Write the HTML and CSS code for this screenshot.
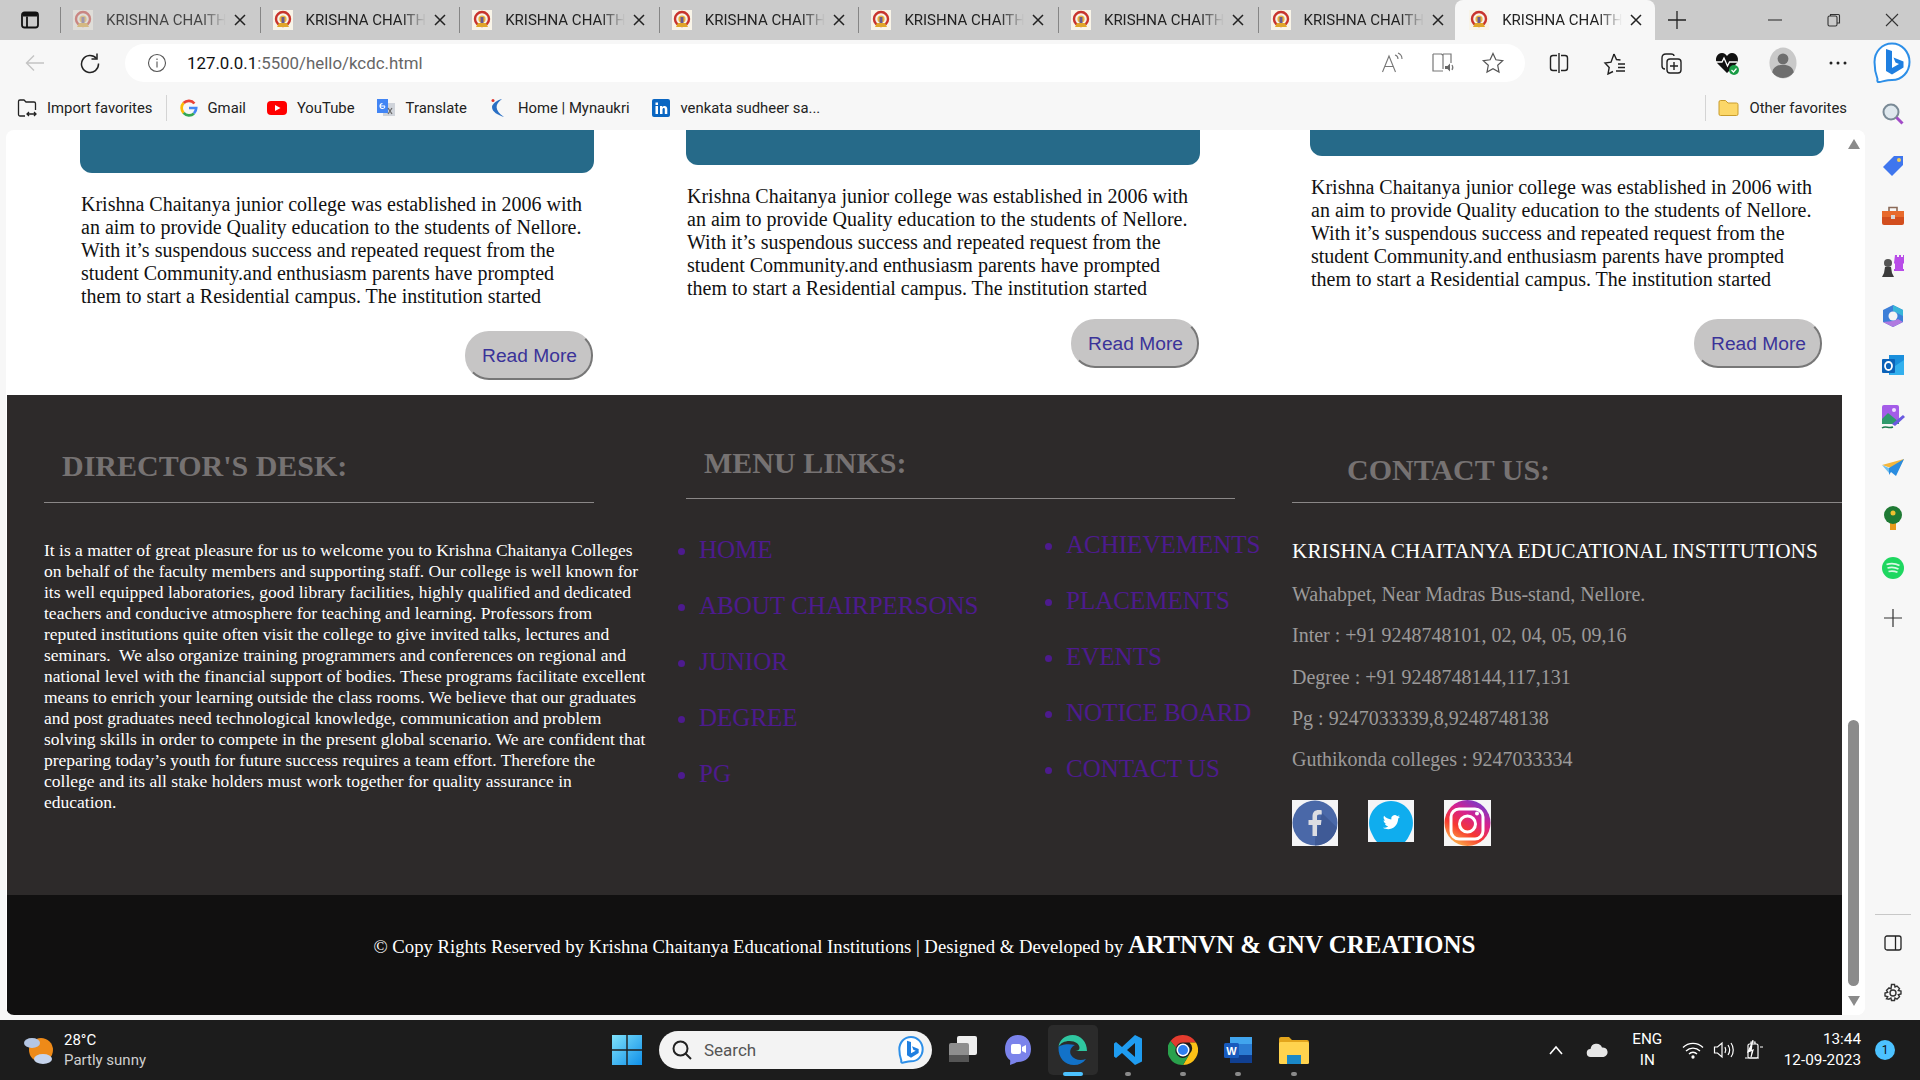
FILE: index.html
```html
<!DOCTYPE html>
<html lang="en">
<head>
    <meta charset="UTF-8">
    <title>KRISHNA CHAITHANYA</title>
    <link rel="stylesheet" href="styles.css">
</head>
<body>
    <svg class="defs" width="0" height="0">
        <symbol id="fav" viewBox="0 0 20 20">
            <rect width="20" height="20" fill="#f8f4e8"/>
            <circle cx="10" cy="9" r="7" fill="none" stroke="#c8342c" stroke-width="2.4"/>
            <circle cx="10" cy="9" r="3.6" fill="#e8b23c"/>
            <path d="M6 13h8l2 4H4z" fill="#e0a52a"/>
            <path d="M8.500 7h3v6h-3z" fill="#6a5a8c"/>
        </symbol>
        <symbol id="tabx" viewBox="0 0 12 12">
            <path d="M1 1l10 10M11 1L1 11" stroke="#222" stroke-width="1.500"/>
        </symbol>
    </svg>

    <div class="tabstrip">
        <div class="strip-btn">
            <svg width="20" height="20" viewBox="0 0 20 20" fill="none" stroke="#111" stroke-width="1.800"><rect x="2" y="2.500" width="16" height="15" rx="2.500"/><path d="M7 6.500V17"/><path d="M3 3h14v3.500H3z" fill="#111" stroke="none"/></svg>
        </div>
        <div class="tab faded"><svg class="favicon"><use href="#fav"/></svg><span class="tab-title">KRISHNA CHAITH</span><svg class="tab-x"><use href="#tabx"/></svg></div>
        <div class="tab"><svg class="favicon"><use href="#fav"/></svg><span class="tab-title">KRISHNA CHAITH</span><svg class="tab-x"><use href="#tabx"/></svg></div>
        <div class="tab"><svg class="favicon"><use href="#fav"/></svg><span class="tab-title">KRISHNA CHAITH</span><svg class="tab-x"><use href="#tabx"/></svg></div>
        <div class="tab"><svg class="favicon"><use href="#fav"/></svg><span class="tab-title">KRISHNA CHAITH</span><svg class="tab-x"><use href="#tabx"/></svg></div>
        <div class="tab"><svg class="favicon"><use href="#fav"/></svg><span class="tab-title">KRISHNA CHAITH</span><svg class="tab-x"><use href="#tabx"/></svg></div>
        <div class="tab"><svg class="favicon"><use href="#fav"/></svg><span class="tab-title">KRISHNA CHAITH</span><svg class="tab-x"><use href="#tabx"/></svg></div>
        <div class="tab"><svg class="favicon"><use href="#fav"/></svg><span class="tab-title">KRISHNA CHAITH</span><svg class="tab-x"><use href="#tabx"/></svg></div>
        <div class="tab active"><svg class="favicon"><use href="#fav"/></svg><span class="tab-title">KRISHNA CHAITH</span><svg class="tab-x"><use href="#tabx"/></svg></div>
        <div class="new-tab">
            <svg width="20" height="20" viewBox="0 0 20 20" stroke="#222" stroke-width="1.300"><path d="M10 1v18M1 10h18"/></svg>
        </div>
        <div class="win-btns">
            <svg width="14" height="14" viewBox="0 0 14 14" stroke="#333" stroke-width="1.100"><path d="M0 7h14"/></svg>
            <svg width="14" height="14" viewBox="0 0 14 14" stroke="#333" stroke-width="1.100" fill="none"><rect x="1" y="3" width="9" height="10" rx="1.500"/><path d="M3.500 3V1.500h8a1 1 0 0 1 1 1V10H10"/></svg>
            <svg width="14" height="14" viewBox="0 0 14 14" stroke="#333" stroke-width="1.100"><path d="M1 1l12 12M13 1L1 13"/></svg>
        </div>
    </div>

    <div class="toolbar">
        <div class="tool-btn back">
            <svg width="20" height="20" viewBox="0 0 20 20" fill="none" stroke="#c4c4c4" stroke-width="1.400"><path d="M19 10H1.500M9 2.500L1.500 10 9 17.500"/></svg>
        </div>
        <div class="tool-btn reload">
            <svg width="22" height="22" viewBox="0 0 22 22" fill="none" stroke="#222" stroke-width="1.500"><path d="M17.500 6.500A8.500 8.500 0 1 0 19.500 11.500"/><path d="M18 1.500v5.500h-5.500"/></svg>
        </div>
        <div class="addressbar">
            <svg class="info" width="20" height="20" viewBox="0 0 20 20" fill="none" stroke="#555" stroke-width="1.100"><circle cx="10" cy="10" r="8.500"/><path d="M10 8.500v6M10 5.500v1.500"/></svg>
            <span class="url"><span class="url-host">127.0.0.1</span>:5500/hello/kcdc.html</span>
            <div class="addr-icons">
                <svg width="24" height="22" viewBox="0 0 24 22" fill="none" stroke="#777" stroke-width="1.100"><path d="M1.500 20L8 4l6.500 16M4 14.500h8"/><path d="M14 3c2 .5 3 2 3 4M17 1c2.500 1 4 3 4 6"/></svg>
                <svg width="24" height="22" viewBox="0 0 24 22" fill="none" stroke="#777" stroke-width="1.200"><path d="M2 2h8.500l1 1 1-1H20v9M12 3v14M12 19H2V2"/><path d="M14 14h2.500l2.500-2.500v8L16.500 17H14z" fill="#666" stroke="none"/><path d="M21 13c1 1.500 1 3.500 0 5" /></svg>
                <svg width="24" height="24" viewBox="0 0 24 24" fill="none" stroke="#555" stroke-width="1.200"><path d="M12 2.500l2.900 6.300 6.800.8-5 4.700 1.300 6.800-6-3.400-6 3.400 1.300-6.800-5-4.700 6.800-.8z"/></svg>
            </div>
        </div>
        <div class="tool-right">
            <div class="tool-btn"><svg width="22" height="22" viewBox="0 0 22 22" fill="none" stroke="#222" stroke-width="1.400"><path d="M9 3.500H5a2.500 2.500 0 0 0-2.500 2.500v10A2.500 2.500 0 0 0 5 18.500h4M13 3.500h4A2.500 2.500 0 0 1 19.500 6v10a2.500 2.500 0 0 1-2.500 2.500h-4M11 1v20"/></svg></div>
            <div class="tool-btn"><svg width="24" height="24" viewBox="0 0 24 24" fill="none" stroke="#222" stroke-width="1.400"><path d="M11 3l2.500 5.500 4 .5M10 20.500l-5 2.500 1.200-6.500L2 12l6-.8L11 3M15 13h7M15 16.500h7M13 20h9"/></svg></div>
            <div class="tool-btn"><svg width="24" height="24" viewBox="0 0 24 24" fill="none" stroke="#222" stroke-width="1.400"><path d="M6 18c-2 0-3-1.500-3-3V7c0-2 1-4 4-4h5c2 0 3 1 3 2"/><rect x="8" y="8" width="14" height="14" rx="3"/><path d="M15 11v8M11 15h8"/></svg></div>
            <div class="tool-btn"><svg width="26" height="26" viewBox="0 0 26 26"><path d="M13 23L3.500 13.500C0 9.500 3 3 8 3c2.500 0 4 1.500 5 3 1-1.500 2.500-3 5-3 5 0 8 6.500 4.500 10.500z" fill="#111"/><path d="M2 12h6l2-4 3.500 8 2-4h8" fill="none" stroke="#fff" stroke-width="1.300"/><circle cx="20" cy="20" r="5" fill="#1a9c46"/><path d="M17.500 20l2 2 3-3.500" fill="none" stroke="#fff" stroke-width="1.200"/></svg></div>
            <div class="tool-btn"><svg width="28" height="34" viewBox="0 0 30 34"><ellipse cx="15" cy="17" rx="14.500" ry="16.500" fill="#c9c9c9"/><circle cx="15" cy="12.500" r="5.800" fill="#6e6e6e"/><path d="M3.500 27c1-6 6-8 11.500-8s10.500 2 11.500 8c-3 4-7 6-11.500 6s-8.500-2-11.500-6z" fill="#6e6e6e"/></svg></div>
            <div class="tool-btn"><svg width="20" height="6" viewBox="0 0 20 6" fill="#222"><circle cx="3" cy="3" r="1.500"/><circle cx="10" cy="3" r="1.500"/><circle cx="17" cy="3" r="1.500"/></svg></div>
            <div class="tool-btn bing">
                <svg width="38" height="42" viewBox="0 0 38 42"><path d="M19 1.500C9 1.500 1.500 9.500 1.500 20c0 6 1.500 13 3 17-.5 2 0 3.500 2 3 3-.5 8-2 12.500-2 10 0 17.500-8 17.500-18S29 1.500 19 1.500z" fill="#fff" stroke="#2d8fe8" stroke-width="2"/><path d="M13 7l6 2v17l7-4-3.500-1.500-2-5 10 4v6l-11.500 7-6-3.500z" fill="#1f7fe0"/></svg>
            </div>
        </div>
    </div>

    <div class="bookmarks">
        <div class="bm">
            <svg width="20" height="20" viewBox="0 0 20 20" fill="none" stroke="#222" stroke-width="1.300"><path d="M8 18H3a1.500 1.500 0 0 1-1.500-1.500v-13A1.500 1.500 0 0 1 3 2h4l2 2h8a1.500 1.500 0 0 1 1.500 1.500V12"/><path d="M10 16h9M12 14l-2 2 2 2M17 14l2 2-2 2"/></svg>
            <span>Import favorites</span>
        </div>
        <div class="bm-sep"></div>
        <div class="bm">
            <svg width="18" height="20" viewBox="0 0 20 20" fill="none" stroke-width="3"><path d="M16 5a8 8 0 0 0-12-.5" stroke="#ea4335"/><path d="M4 4.500a8 8 0 0 0 0 11" stroke="#fbbc05"/><path d="M4 15.500a8 8 0 0 0 11.500 .5" stroke="#34a853"/><path d="M15.500 16c1.500-1.500 2.500-3.500 2.500-6h-8" stroke="#4285f4"/></svg>
            <span>Gmail</span>
        </div>
        <div class="bm">
            <svg width="20" height="20" viewBox="0 0 20 20"><rect y="3" width="20" height="14" rx="4" fill="#f00"/><path d="M8 7l5.500 3L8 13z" fill="#fff"/></svg>
            <span>YouTube</span>
        </div>
        <div class="bm">
            <svg width="20" height="20" viewBox="0 0 20 20"><rect x="7" y="5" width="12" height="13" fill="#cfd3da"/><path d="M1 1h11v14H1z" fill="#4285f4"/><path d="M4 8h5M6.500 5.500a2.500 2.500 0 1 0 2.500 3" fill="none" stroke="#fff" stroke-width="1.200"/><path d="M12 10l4 6M16 10l-4 6" stroke="#666" stroke-width="1.200"/></svg>
            <span>Translate</span>
        </div>
        <div class="bm">
            <svg width="20" height="20" viewBox="0 0 20 20"><path d="M14 1C7 6 6 12 16 19 10 17 4 14 4 9c0-3 5-7 10-8z" fill="#2a6fc4"/><circle cx="5" cy="2.500" r="1.500" fill="#e0342c"/></svg>
            <span>Home | Mynaukri</span>
        </div>
        <div class="bm">
            <svg width="20" height="20" viewBox="0 0 20 20"><rect x="1" y="1" width="18" height="18" rx="2" fill="#0a66c2"/><path d="M4.500 8h2.500v8H4.500zM4.500 4.500h2.500V7H4.500zM9 8h2.300v1.200c1-1.800 5-2 5 1.800v5h-2.500v-4.500c0-2-2.300-1.800-2.300.2V16H9z" fill="#fff"/></svg>
            <span>venkata sudheer sa...</span>
        </div>
        <div class="bm-right">
            <div class="bm-sep"></div>
            <div class="bm">
                <svg width="21" height="20" viewBox="0 0 21 20"><path d="M1 4a1.500 1.500 0 0 1 1.500-1.500h5L10 5h8.500A1.500 1.500 0 0 1 20 6.500V16a1.500 1.500 0 0 1-1.500 1.500h-16A1.500 1.500 0 0 1 1 16z" fill="#fcd768" stroke="#c89c2c"/></svg>
                <span>Other favorites</span>
            </div>
            <div class="side-slot">
                <svg width="24" height="24" viewBox="0 0 24 24"><circle cx="10" cy="10" r="7.500" fill="#dfe8ee" stroke="#7a8a96" stroke-width="2"/><path d="M15.500 15.500l6 6" stroke="#a24cc8" stroke-width="3"/></svg>
            </div>
        </div>
    </div>

    <div class="workarea">
        <div class="page">
            <div class="page-main">
                <div class="cards">
                    <div class="card card-a">
                        <div class="card-banner"></div>
                        <p class="card-text">Krishna Chaitanya junior college was established in 2006 with an aim to provide Quality education to the students of Nellore. With it&rsquo;s suspendous success and repeated request from the student Community.and enthusiasm parents have prompted them to start a Residential campus. The institution started</p>
                        <a class="read-more">Read More</a>
                    </div>
                    <div class="card card-b">
                        <div class="card-banner"></div>
                        <p class="card-text">Krishna Chaitanya junior college was established in 2006 with an aim to provide Quality education to the students of Nellore. With it&rsquo;s suspendous success and repeated request from the student Community.and enthusiasm parents have prompted them to start a Residential campus. The institution started</p>
                        <a class="read-more">Read More</a>
                    </div>
                    <div class="card card-c">
                        <div class="card-banner"></div>
                        <p class="card-text">Krishna Chaitanya junior college was established in 2006 with an aim to provide Quality education to the students of Nellore. With it&rsquo;s suspendous success and repeated request from the student Community.and enthusiasm parents have prompted them to start a Residential campus. The institution started</p>
                        <a class="read-more">Read More</a>
                    </div>
                </div>

                <div class="footer">
                    <div class="foot-col desk">
                        <h2>DIRECTOR'S DESK:</h2>
                        <hr>
                        <p class="desk-text">It is a matter of great pleasure for us to welcome you to Krishna Chaitanya Colleges on behalf of the faculty members and supporting staff. Our college is well known for its well equipped laboratories, good library facilities, highly qualified and dedicated teachers and conducive atmosphere for teaching and learning. Professors from reputed institutions quite often visit the college to give invited talks, lectures and seminars.&nbsp; We also organize training programmers and conferences on regional and national level with the financial support of bodies. These programs facilitate excellent means to enrich your learning outside the class rooms. We believe that our graduates and post graduates need technological knowledge, communication and problem solving skills in order to compete in the present global scenario. We are confident that preparing today&rsquo;s youth for future success requires a team effort. Therefore the college and its all stake holders must work together for quality assurance in education.</p>
                    </div>
                    <div class="foot-col menu">
                        <h2>MENU LINKS:</h2>
                        <hr>
                        <div class="menu-lists">
                            <ul class="list-a">
                                <li>HOME</li>
                                <li>ABOUT CHAIRPERSONS</li>
                                <li>JUNIOR</li>
                                <li>DEGREE</li>
                                <li>PG</li>
                            </ul>
                            <ul class="list-b">
                                <li>ACHIEVEMENTS</li>
                                <li>PLACEMENTS</li>
                                <li>EVENTS</li>
                                <li>NOTICE BOARD</li>
                                <li>CONTACT US</li>
                            </ul>
                        </div>
                    </div>
                    <div class="foot-col contact">
                        <h2>CONTACT US:</h2>
                        <hr>
                        <h3>KRISHNA CHAITANYA EDUCATIONAL INSTITUTIONS</h3>
                        <p>Wahabpet, Near Madras Bus-stand, Nellore.</p>
                        <p>Inter : +91 9248748101, 02, 04, 05, 09,16</p>
                        <p>Degree : +91 9248748144,117,131</p>
                        <p>Pg : 9247033339,8,9248748138</p>
                        <p>Guthikonda colleges : 9247033334</p>
                        <div class="socials">
                            <svg width="46" height="46" viewBox="0 0 46 46"><rect width="46" height="46" fill="#f4f4f6"/><circle cx="23" cy="23" r="22.500" fill="#4a68a8"/><path d="M23 45.500a22.500 22.500 0 0 0 22-18L30 13l-7 26z" fill="#3f5a96"/><path d="M20.500 36V25h-4v-5h4v-3.500c0-4.500 2.500-6.500 6-6.500 1.500 0 2.800 .1 3.200 .2v4.300h-2.500c-1.700 0-2.200 .9-2.200 2.200V20h4.500l-.6 5h-3.900v11z" fill="#dcdde2"/></svg>
                            <svg class="tw" width="46" height="42" viewBox="0 0 46 42"><rect width="46" height="42" fill="#f4f4f6"/><path d="M23 1a22 22 0 0 1 19 33c-1.500 3-3 6-5 8H9c-2-2-3.500-5-5-8A22 22 0 0 1 23 1z" fill="#0fadee"/><path transform="translate(7.500 6.500) scale(.68)" d="M36 15c-1 .5-2 .7-3 .8 1-.6 2-1.600 2.300-2.800-1 .6-2.100 1-3.300 1.300a5.200 5.200 0 0 0-8.800 4.700c-4.300-.2-8-2.200-10.600-5.300-1.400 2.400-.7 5.400 1.600 7-.8 0-1.600-.2-2.300-.6 0 2.500 1.800 4.700 4.200 5.200-.8 .2-1.500 .2-2.300 .1 .7 2.100 2.600 3.600 4.900 3.600-2.200 1.700-5 2.500-7.700 2.200 8 5 21.700 1.500 22.400-13.400 1-.7 1.900-1.600 2.600-2.800z" fill="#fff"/></svg>
                            <svg width="47" height="46" viewBox="0 0 47 46"><defs><linearGradient id="ig" x1="0.200" y1="1" x2="0.800" y2="0"><stop offset="0" stop-color="#fdc04c"/><stop offset="0.350" stop-color="#f7382f"/><stop offset="0.650" stop-color="#d6208f"/><stop offset="1" stop-color="#6a3fd0"/></linearGradient></defs><rect width="47" height="46" fill="#f6f6f6"/><circle cx="23.500" cy="23" r="23" fill="url(#ig)"/><rect x="7" y="9" width="32" height="30" rx="8" fill="none" stroke="#fff" stroke-width="3"/><circle cx="23.500" cy="24" r="8" fill="none" stroke="#fff" stroke-width="3"/><circle cx="33" cy="13.500" r="2" fill="#fff"/></svg>
                        </div>
                    </div>
                </div>

                <div class="copyright">
                    <p>&copy; Copy Rights Reserved by Krishna Chaitanya Educational Institutions | Designed &amp; Developed by <strong>ARTNVN &amp; GNV CREATIONS</strong></p>
                </div>
            </div>
            <div class="scrollbar">
                <span class="arrow-up"></span>
                <div class="thumb"></div>
                <span class="arrow-down"></span>
            </div>
        </div>

        <div class="sidebar">
            <svg width="24" height="24" viewBox="0 0 24 24"><path d="M13 2h9v9L11 22 2 13z" fill="#3f76ee"/><circle cx="18" cy="6" r="2" fill="#f4cf5a"/></svg>
            <svg width="24" height="24" viewBox="0 0 24 24"><path d="M8 7V3.500h8V7" fill="none" stroke="#8a6a58" stroke-width="1.600"/><rect x="1" y="7" width="22" height="14" rx="2" fill="#d24e1e"/><rect x="1" y="7" width="22" height="6" fill="#e86a2c"/><rect x="10" y="11" width="4" height="4" fill="#d8d8d8"/></svg>
            <svg width="24" height="24" viewBox="0 0 24 24"><path d="M14 1h2v2h2V1h2v2h2V1h1v8l-1 1v5h1v2H13v-2h1v-5l-1-1z" fill="#b84ce8"/><circle cx="7" cy="9" r="4" fill="#555"/><path d="M4 13h6l1 6 2 4H1l2-4z" fill="#3c3c3c"/></svg>
            <svg width="24" height="24" viewBox="0 0 24 24"><path d="M12 1l10 5v12l-10 5-10-5V6z" fill="#3d7fd8"/><path d="M12 1l10 5v6l-10-5z" fill="#38b6d8"/><path d="M2 18l10 5 10-5-5-3-5 2z" fill="#b07ae0"/><circle cx="12" cy="12" r="4.500" fill="#f4f4f4"/></svg>
            <svg width="24" height="24" viewBox="0 0 24 24"><path d="M8 1h15v20H8z" fill="#1a8fdc"/><path d="M14 12l9-6v15H8z" fill="#33b0ee"/><rect x="1" y="5" width="13" height="14" rx="1" fill="#0b62b8"/><ellipse cx="7.500" cy="12" rx="3.500" ry="4" fill="none" stroke="#fff" stroke-width="1.800"/></svg>
            <svg width="26" height="26" viewBox="0 0 26 26"><rect x="2" y="1" width="17" height="19" rx="2" fill="#a45ce8"/><path d="M2 15l6-6 11 9v2H2z" fill="#2f9a6c"/><circle cx="14" cy="6" r="2" fill="#f0e0ff"/><path d="M12 20l11-9 2 2-10 9z" fill="#6a5ae0"/><path d="M2 24c4-3 6 1 11-1" fill="none" stroke="#1a7a4c" stroke-width="1.500"/></svg>
            <svg width="24" height="24" viewBox="0 0 24 24"><path d="M1 9l22-6-8 15-5-6z" fill="#f4b63c"/><path d="M8 12l15-9-8 17-5-4-2 3z" fill="#2a8ce0"/><path d="M1 9l7 3v5z" fill="#6fc0f0"/></svg>
            <svg width="24" height="24" viewBox="0 0 24 24"><rect x="9" y="16" width="6" height="8" fill="#e89a1c"/><circle cx="12" cy="9" r="9" fill="#1f7a34"/><circle cx="12" cy="7" r="2.500" fill="#f0c030"/></svg>
            <svg width="24" height="24" viewBox="0 0 24 24"><circle cx="12" cy="12" r="11" fill="#1ed760"/><path d="M5.500 8.500c4-1.200 9-1 13 1M6.500 12c3.500-1 7.500-.8 11 1M7.500 15.500c3-.8 6-.6 9 .8" fill="none" stroke="#d8f8e4" stroke-width="1.800"/></svg>
            <svg class="side-plus" width="18" height="18" viewBox="0 0 18 18" stroke="#333" stroke-width="1.200"><path d="M9 0v18M0 9h18"/></svg>
            <div class="side-bottom">
                <div class="side-line"></div>
                <svg width="18" height="16" viewBox="0 0 18 16" fill="none" stroke="#222" stroke-width="1.300"><rect x="1" y="1" width="16" height="14" rx="2"/><path d="M11.500 1v14"/></svg>
                <svg class="side-gear" width="20" height="20" viewBox="0 0 20 20" fill="none" stroke="#333" stroke-width="1.400"><circle cx="10" cy="10" r="3"/><path d="M8.500 1.500h3l.5 2.500 2-1 2.500 2.500-1.200 2 2.700.5v3l-2.700.7 1.200 2-2.500 2.500-2-1.200-.5 2.500h-3l-.6-2.500-2 1.200L3.500 15.700l1.200-2L2 13V10l2.700-.7-1.200-2L6 4.900l2 1z"/></svg>
            </div>
        </div>
    </div>

    <div class="taskbar">
        <div class="weather">
            <svg width="34" height="34" viewBox="0 0 34 34"><circle cx="18" cy="17" r="12" fill="#ee8a18"/><ellipse cx="9" cy="10" rx="8" ry="5" fill="#b4c6e4"/><ellipse cx="20" cy="26" rx="9" ry="5" fill="#c6d4ec"/></svg>
            <div class="weather-text">
                <span>28&deg;C</span>
                <span class="weather-sub">Partly sunny</span>
            </div>
        </div>
        <div class="task-center">
            <svg class="start" width="30" height="30" viewBox="0 0 30 30"><defs><linearGradient id="win" x1="0" y1="0" x2="1" y2="1"><stop offset="0" stop-color="#7fe2fb"/><stop offset="1" stop-color="#0f8fe8"/></linearGradient></defs><path d="M0 0h14.300v14.300H0zM15.700 0H30v14.300H15.700zM0 15.700h14.300V30H0zM15.700 15.700H30V30H15.700z" fill="url(#win)"/></svg>
            <div class="task-search">
                <svg width="22" height="22" viewBox="0 0 22 22" fill="none" stroke="#222" stroke-width="2"><circle cx="9.500" cy="9.500" r="7"/><path d="M14.500 14.500L20 20"/></svg>
                <span>Search</span>
                <svg class="search-bing" width="26" height="28" viewBox="0 0 38 42"><path d="M19 1.500C9 1.500 1.500 9.500 1.500 20c0 6 1.500 13 3 17-.5 2 0 3.500 2 3 3-.5 8-2 12.500-2 10 0 17.500-8 17.500-18S29 1.500 19 1.500z" fill="#fff" stroke="#2d8fe8" stroke-width="3"/><path d="M13 7l6 2v17l7-4-3.500-1.500-2-5 10 4v6l-11.500 7-6-3.500z" fill="#1f7fe0"/></svg>
            </div>
            <div class="task-app"><svg width="30" height="30" viewBox="0 0 30 30"><rect x="9" y="1" width="20" height="19" rx="2" fill="#eee"/><rect x="1" y="8" width="20" height="19" rx="2" fill="#8e8e8e"/><rect x="1" y="20" width="20" height="7" fill="#555"/></svg></div>
            <div class="task-app"><svg width="30" height="32" viewBox="0 0 30 32"><path d="M15 1c8 0 13 6 13 14s-5 13-13 13c-2 0-4 2-8 3 0-2 .5-4 0-5-3-2-5-6-5-11C2 7 7 1 15 1z" fill="#7b83eb"/><rect x="8" y="10" width="10" height="10" rx="2" fill="#fff"/><path d="M19 13l4-2v8l-4-2z" fill="#fff"/></svg></div>
            <div class="task-app on"><svg width="32" height="32" viewBox="0 0 32 32"><path d="M30 17C30 8 24 1 15.500 1 8 1 2 6 1.500 13c2-4 6-6 11-6 6 0 10 3 10 7 0 2-2 3-4 3z" fill="#2fc6a0"/><path d="M1.500 13C1 24 8 31 17 31c5 0 9-2 12-6-5 2-12 1-15-4-2-4 0-8 4-10-8-2-15 0-16.500 2z" fill="#1272c8"/></svg><i class="dot-wide"></i></div>
            <div class="task-app"><svg width="30" height="32" viewBox="0 0 30 32"><path d="M22 1l7 3.500v23L22 31 9 19l-6 5-2-1.500V9.500L3 8l6 5zM22 9l-8 7 8 7z" fill="#1f9cf0"/></svg><i class="dot"></i></div>
            <div class="task-app"><svg width="30" height="32" viewBox="0 0 30 32"><path d="M15 1a15 15 0 0 1 13 7.500H15a7.500 7.500 0 0 0-7 5L2.500 7A15 15 0 0 1 15 1z" fill="#e33b2e"/><path d="M28 8.500A15 15 0 0 1 15 31l6.500-11a7.500 7.500 0 0 0 0-11.500z" fill="#fbc116"/><path d="M2.500 7A15 15 0 0 0 15 31l6.500-11a7.500 7.500 0 0 1-13.500-6.500z" fill="#2aa14c"/><circle cx="15" cy="16" r="6.500" fill="#fff"/><circle cx="15" cy="16" r="5" fill="#2f7ff0"/></svg><i class="dot"></i></div>
            <div class="task-app"><svg width="30" height="30" viewBox="0 0 30 30"><rect x="7" y="2" width="22" height="26" rx="2" fill="#2b7cd3"/><rect x="7" y="2" width="22" height="7" fill="#41a5ee"/><rect x="7" y="20" width="22" height="8" fill="#103f91"/><rect x="1" y="8" width="15" height="15" rx="1.500" fill="#185abd"/><text class="w-mark" x="8.500" y="19.500">W</text></svg><i class="dot"></i></div>
            <div class="task-app"><svg width="32" height="30" viewBox="0 0 32 30"><path d="M1 4a2 2 0 0 1 2-2h8l3 3h15a2 2 0 0 1 2 2v4H1z" fill="#e3a51c"/><rect x="1" y="7" width="30" height="22" rx="1.500" fill="#ffd34e"/><rect x="9" y="20" width="14" height="9" fill="#1a88c8"/></svg><i class="dot"></i></div>
        </div>
        <div class="tray">
            <svg width="16" height="10" viewBox="0 0 16 10" fill="none" stroke="#fff" stroke-width="1.600"><path d="M2 9l6-7 6 7"/></svg>
            <svg class="tray-cloud" width="22" height="16" viewBox="0 0 22 16" fill="#e6e6e6"><path d="M5 15a4 4 0 0 1-.5-8A6 6 0 0 1 16 5.500 4.500 4.500 0 0 1 17.500 15z"/></svg>
            <div class="lang"><span>ENG</span><span>IN</span></div>
            <svg class="tray-wifi" width="22" height="18" viewBox="0 0 22 18" fill="none" stroke="#fff" stroke-width="1.300"><path d="M1 6.500a14 14 0 0 1 20 0M4 10a10 10 0 0 1 14 0M7 13a5.500 5.500 0 0 1 8 0"/><circle cx="11" cy="16" r="1" fill="#fff"/></svg>
            <svg width="22" height="18" viewBox="0 0 22 18" fill="none" stroke="#fff" stroke-width="1.200"><path d="M1.500 6h3L9 2v14l-4.500-4h-3z"/><path d="M12 6c1 2 1 4 0 6M15 4c2 3 2 7 0 10M18 2c3 4 3 10 0 14"/></svg>
            <svg width="20" height="22" viewBox="0 0 20 22" fill="none" stroke="#fff" stroke-width="1.200"><rect x="4" y="5" width="10" height="14" rx="1.500"/><path d="M7 5V3h4v2M1 19h14M16 8h3"/><path d="M9 1c-1 5-3 7-5 12l5-2-2 7" fill="#fff"/></svg>
            <div class="clock"><span>13:44</span><span>12-09-2023</span></div>
            <span class="notif">1</span>
        </div>
    </div>
</body>
</html>
```

FILE: styles.css
```css
* {
    box-sizing: border-box;
}
html, body {
    margin: 0;
    height: 100%;
    overflow: hidden;
}
body {
    width: 1920px;
    height: 1080px;
    display: flex;
    flex-direction: column;
    font-family: "Liberation Serif", serif;
    background: #f7f7f7;
}
.defs {
    position: absolute;
}

/* browser tabs */
.tabstrip {
    height: 40px;
    flex: none;
    display: flex;
    align-items: center;
    background: #cbcbcb;
    font-family: Roboto, sans-serif;
    color: #222;
}
.strip-btn {
    width: 60px;
    display: flex;
    justify-content: center;
}
.tab {
    width: 199.6px;
    height: 26px;
    flex: none;
    display: flex;
    align-items: center;
    padding-left: 12px;
    border-left: 1px solid #858585;
    font-size: 15px;
}
.tab.faded .favicon {
    opacity: 0.45;
}
.tab.faded .tab-title {
    opacity: 0.8;
}
.favicon {
    width: 20px;
    height: 20px;
    flex: none;
}
.tab-title {
    width: 120px;
    margin-left: 13px;
    overflow: hidden;
    white-space: nowrap;
    -webkit-mask-image: linear-gradient(to right, #000 80%, transparent 100%);
    mask-image: linear-gradient(to right, #000 80%, transparent 100%);
}
.tab-x {
    width: 12px;
    height: 12px;
    margin-left: 8px;
    flex: none;
}
.tab.active {
    height: 40px;
    margin-left: -2px;
    width: 200px;
    padding-left: 14px;
    border-left: 0;
    background: #f7f7f7;
    border-radius: 8px 8px 0 0;
}
.new-tab {
    margin-left: 12px;
    display: flex;
}
.win-btns {
    margin-left: auto;
    width: 190px;
    padding: 0 21px 0 38px;
    display: flex;
    justify-content: space-between;
    align-items: center;
}

/* toolbar */
.toolbar {
    height: 46px;
    flex: none;
    display: flex;
    align-items: center;
    font-family: Roboto, sans-serif;
}
.tool-btn {
    width: 55.9px;
    flex: none;
    display: flex;
    justify-content: center;
    align-items: center;
}
.tool-btn.back {
    width: 50px;
    margin-left: 10px;
}
.tool-btn.reload {
    width: 50px;
    margin-left: 5px;
}
.addressbar {
    width: 1400px;
    height: 38px;
    margin-left: 10px;
    padding: 0 20px 0 22px;
    flex: none;
    display: flex;
    align-items: center;
    background: #fff;
    border-radius: 19px;
    font-size: 16.85px;
    color: #666;
}
.info {
    flex: none;
}
.url {
    margin-left: 20px;
}
.url-host {
    color: #111;
}
.addr-icons {
    margin-left: auto;
    width: 124px;
    display: flex;
    justify-content: space-between;
    align-items: center;
}
.tool-right {
    margin-left: 6px;
    flex: 1;
    display: flex;
    align-items: center;
}
.tool-btn.bing {
    width: 56px;
    margin-left: -2px;
}

/* favorites bar */
.bookmarks {
    height: 44px;
    flex: none;
    padding-left: 17px;
    display: flex;
    align-items: center;
    gap: 21px;
    font-family: Roboto, sans-serif;
    font-size: 14.85px;
    color: #222;
}
.bm {
    display: flex;
    align-items: center;
    gap: 10px;
    white-space: nowrap;
}
.bm-sep {
    width: 1px;
    height: 26px;
    margin: 0 -8px 0 -8px;
    background: #d4d4d4;
}
.bm-right {
    margin-left: auto;
    display: flex;
    align-items: center;
    gap: 20px;
}
.side-slot {
    width: 55px;
    margin-left: -2px;
    margin-top: 12px;
    display: flex;
    justify-content: center;
}

/* page area */
.workarea {
    flex: 1;
    min-height: 0;
    display: flex;
    align-items: stretch;
}
.page {
    width: 1859px;
    margin: 0 0 5px 6px;
    flex: none;
    display: flex;
    background: #fff;
    border-radius: 8px;
    overflow: hidden;
}
.page-main {
    width: 1836px;
    flex: none;
    padding-left: 1px;
    display: flex;
    flex-direction: column;
}
.cards {
    height: 265px;
    flex: none;
    display: flex;
}
.card {
    width: 514px;
    flex: none;
    display: flex;
    flex-direction: column;
}
.card-banner {
    background: #266a89;
    border-radius: 0 0 12px 12px;
}
.card-text {
    margin: 0;
    padding: 0 3px 0 1px;
    font-size: 20px;
    line-height: 23px;
    color: #111;
}
.read-more {
    height: 49px;
    align-self: flex-end;
    padding: 0 14px 0 15px;
    background: #c6c5c5;
    border: 2px solid #c6c5c5;
    border-right-color: #777;
    border-bottom-color: #777;
    border-radius: 24px;
    font-family: "Liberation Sans", sans-serif;
    font-size: 19.2px;
    color: #3a3399;
    display: flex;
    align-items: center;
}
.card-a {
    margin-left: 73px;
}
.card-a .card-banner {
    height: 43px;
}
.card-a .card-text {
    margin-top: 20px;
}
.card-a .read-more {
    margin-top: 23px;
    margin-right: 1px;
}
.card-b {
    margin-left: 92px;
}
.card-b .card-banner {
    height: 35px;
}
.card-b .card-text {
    margin-top: 20px;
}
.card-b .read-more {
    margin-top: 19px;
    margin-right: 1px;
}
.card-c {
    margin-left: 110px;
}
.card-c .card-banner {
    height: 26px;
}
.card-c .card-text {
    margin-top: 20px;
}
.card-c .read-more {
    margin-top: 28px;
    margin-right: 2px;
}

/* footer */
.footer {
    height: 500px;
    flex: none;
    display: flex;
    background: #2d2a2a;
}
.foot-col {
    flex: none;
}
.foot-col h2 {
    margin: 0;
    font-size: 30px;
    line-height: 34px;
    color: #767272;
}
.foot-col hr {
    margin: 0;
    border: 0;
    height: 1px;
    background: #8a8787;
}
.desk {
    width: 603px;
    margin-left: 37px;
    margin-right: 3px;
    padding-top: 54px;
}
.desk h2 {
    padding-left: 18px;
}
.desk hr {
    width: 550px;
    margin-top: 19px;
}
.desk-text {
    margin: 37px 0 0;
    font-size: 17.5px;
    line-height: 21px;
    color: #fff;
}
.menu {
    width: 549px;
    margin-left: 36px;
    padding-top: 51px;
}
.menu h2 {
    padding-left: 18px;
}
.menu hr {
    margin-top: 18px;
}
.menu-lists {
    display: flex;
}
.menu-lists ul {
    margin: 0;
    padding: 0;
    flex: none;
    list-style: disc;
    font-size: 25px;
    line-height: 56px;
    color: #4d1b8e;
}
.menu-lists .list-a {
    width: 380px;
    margin-top: 23px;
    padding-left: 13px;
}
.menu-lists .list-b {
    margin-top: 18px;
    white-space: nowrap;
}
.contact {
    width: 550px;
    margin-left: 57px;
    padding-top: 58px;
    color: #9c9a9a;
    font-size: 20px;
}
.contact h2 {
    padding-left: 55px;
}
.contact hr {
    margin-top: 15px;
}
.contact h3 {
    margin: 35px 0 0;
    font-size: 21.3px;
    font-weight: normal;
    line-height: 26px;
    color: #fff;
    white-space: nowrap;
}
.contact p {
    margin: 0;
    line-height: 41.3px;
}
.contact h3 + p {
    margin-top: 10px;
}
.socials {
    margin-top: 20px;
    display: flex;
    gap: 30px;
    align-items: flex-start;
}
.socials svg {
    display: block;
}
.copyright {
    height: 120px;
    flex: none;
    background: #111010;
    display: flex;
    justify-content: center;
    color: #fff;
}
.copyright p {
    margin: 36px 0 0;
    font-size: 18.72px;
    white-space: nowrap;
}
.copyright strong {
    font-size: 25px;
}

/* scrollbar */
.scrollbar {
    flex: 1;
    position: relative;
    background: #fff;
}
.arrow-up, .arrow-down {
    position: absolute;
    left: 6px;
    width: 0;
    height: 0;
    border-left: 6px solid transparent;
    border-right: 6px solid transparent;
}
.arrow-up {
    top: 9px;
    border-bottom: 10px solid #8b8b8b;
}
.arrow-down {
    bottom: 9px;
    border-top: 10px solid #8b8b8b;
}
.thumb {
    position: absolute;
    top: 590px;
    left: 6px;
    width: 11px;
    height: 266px;
    background: #8b8b8b;
    border-radius: 6px;
}

/* edge sidebar */
.sidebar {
    flex: 1;
    padding-top: 24px;
    display: flex;
    flex-direction: column;
    align-items: center;
    gap: 26px;
}
.side-plus {
    margin-top: 3px;
}
.side-bottom {
    margin-top: auto;
    padding-bottom: 17px;
    display: flex;
    flex-direction: column;
    align-items: center;
    gap: 20px;
}
.side-gear {
    margin-top: 12px;
}
.side-line {
    width: 36px;
    height: 1px;
    background: #c8c8c8;
}

/* windows taskbar */
.taskbar {
    height: 60px;
    flex: none;
    display: flex;
    align-items: center;
    background: #1c1c1c;
    font-family: Roboto, sans-serif;
    color: #fff;
}
.weather {
    width: 612px;
    padding-left: 23px;
    display: flex;
    align-items: center;
    gap: 7px;
}
.weather-text {
    display: flex;
    flex-direction: column;
    font-size: 15px;
    line-height: 20px;
}
.weather-sub {
    color: #cfcfcf;
}
.task-center {
    display: flex;
    align-items: center;
}
.start {
    flex: none;
}
.task-search {
    width: 273px;
    height: 38px;
    margin-left: 17px;
    margin-right: 6px;
    padding: 0 8px 0 12px;
    display: flex;
    align-items: center;
    gap: 11px;
    background: #f3f3f3;
    border-radius: 19px;
    font-size: 17px;
    color: #555;
}
.search-bing {
    margin-left: auto;
}
.task-app {
    position: relative;
    width: 50px;
    height: 50px;
    margin-right: 5.1px;
    flex: none;
    display: flex;
    justify-content: center;
    align-items: center;
    border-radius: 5px;
}
.task-app.on {
    background: #2b2b2b;
}
.w-mark {
    font-family: "Liberation Sans", sans-serif;
    font-size: 11px;
    font-weight: bold;
    fill: #fff;
    text-anchor: middle;
}
.dot, .dot-wide {
    position: absolute;
    bottom: -1px;
    height: 4px;
    border-radius: 2px;
    background: #8a8a8a;
}
.dot {
    left: 22px;
    width: 6px;
}
.dot-wide {
    left: 15px;
    width: 20px;
    background: #4cc2ff;
}
.tray {
    margin-left: auto;
    padding-right: 25px;
    display: flex;
    align-items: center;
    font-size: 15.3px;
}
.lang {
    width: 44px;
    margin: 0 13px 0 17.5px;
    display: flex;
    flex-direction: column;
    align-items: center;
    line-height: 21px;
}
.tray svg + svg {
    margin-left: 9px;
}
.tray .tray-cloud {
    margin-left: 21.5px;
}
.clock {
    margin-left: 19.5px;
    display: flex;
    flex-direction: column;
    align-items: flex-end;
    line-height: 21px;
}
.notif {
    width: 20px;
    height: 20px;
    margin-left: 14px;
    border-radius: 50%;
    background: #4cc2ff;
    color: #111;
    font-size: 12px;
    text-align: center;
    line-height: 20px;
}
```
